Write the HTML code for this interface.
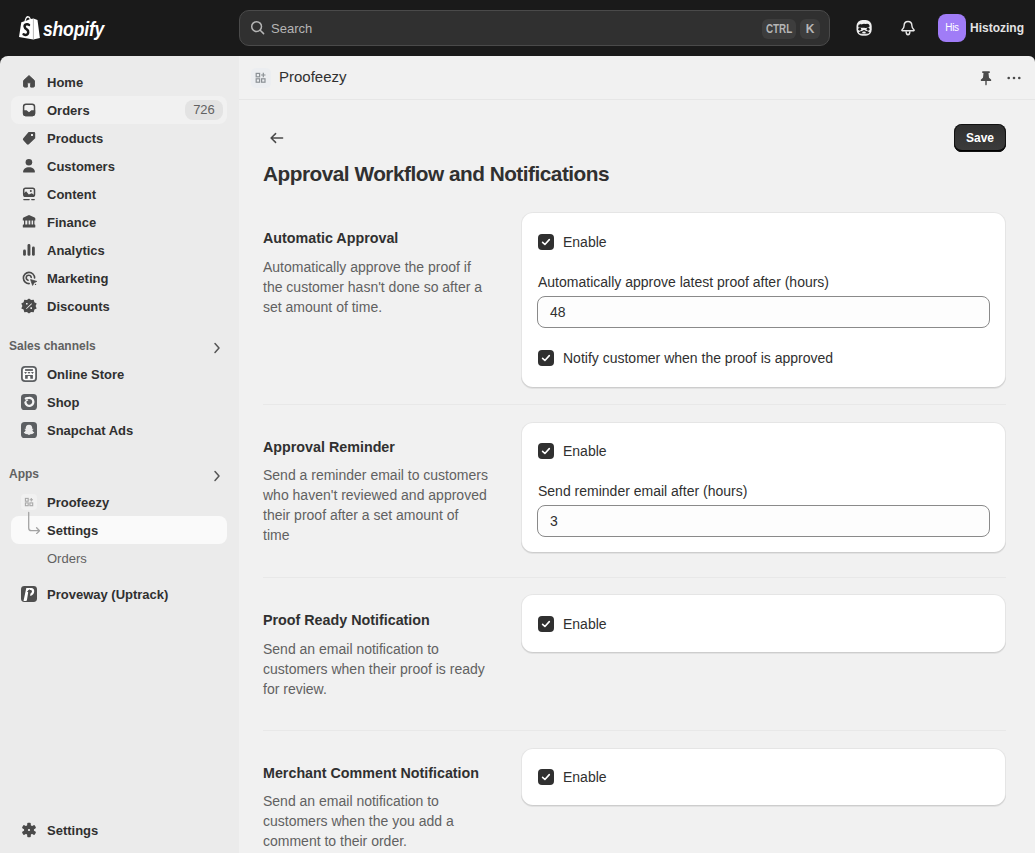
<!DOCTYPE html>
<html><head><meta charset="utf-8">
<style>
*{box-sizing:border-box;margin:0;padding:0}
html,body{width:1035px;height:853px;overflow:hidden;background:#1a1a1a;font-family:"Liberation Sans",sans-serif;color:#303030}
.a{position:absolute}
#top{position:absolute;left:0;top:0;width:1035px;height:56px;background:#1a1a1a}
#side{position:absolute;left:0;top:56px;width:239px;height:797px;background:#ebebeb;border-top-left-radius:8px;overflow:hidden}
#main{position:absolute;left:239px;top:56px;width:796px;height:797px;background:#f1f1f1;border-top-right-radius:6px;overflow:hidden}
.ni{position:absolute;left:11px;width:216px;height:28px;border-radius:8px}
.nt{position:absolute;left:47px;margin-top:1px;font-size:13px;font-weight:700;line-height:28px;height:28px;white-space:nowrap;color:#303030}
.ic{position:absolute;left:21px;width:16px;height:16px}
.sh{position:absolute;left:9px;font-size:12px;font-weight:700;line-height:28px;color:#616161}
.txt{position:absolute;font-size:14px;line-height:20px;white-space:nowrap}
.h{position:absolute;left:24px;font-size:14.3px;font-weight:700;line-height:20px;white-space:nowrap;color:#303030}
.d{position:absolute;left:24px;font-size:14px;line-height:20px;color:#616161;white-space:nowrap}
.card{position:absolute;left:282px;width:485px;background:#fff;border-radius:12px;box-shadow:0 1px 0 0 rgba(26,26,26,.07),0 0 0 1px rgba(0,0,0,.1) inset, 0 -1px 0 0 rgba(0,0,0,.1) inset}
.cb{position:absolute;left:17px;width:16px;height:16px;background:#303030;border-radius:4px}
.cb svg{position:absolute;left:0;top:0}
.cl{position:absolute;left:42px;font-size:14px;line-height:20px;white-space:nowrap;color:#303030}
.lab{position:absolute;left:17px;font-size:14px;line-height:20px;white-space:nowrap;color:#303030}
.inp{position:absolute;left:16px;width:453px;height:32px;border:1px solid #8a8a8a;border-radius:8px;background:#fdfdfd}
.inp span{position:absolute;left:12px;top:5px;font-size:14px;line-height:20px;color:#303030}
.div{position:absolute;left:24px;width:743px;height:1px;background:#e8e8e8}
</style></head><body>
<div id="top">
  <svg class="a" style="left:16px;top:12px" width="28" height="30" viewBox="0 0 28 30">
    <path fill="#fff" d="M5.3 10.2 L8.4 9.2 Q9.6 4 11.9 4 Q14 4 14.9 6.9 L17.4 6.4 L21.5 8.1 L23.9 26 L17.3 27.6 L3 25 Z"/>
    <path fill="#1a1a1a" d="M9.6 8.9 Q10.6 5.6 12 5.6 Q13.2 5.6 13.7 7.2 Z"/>
    <path fill="none" stroke="#9a9a9a" stroke-width=".7" d="M17.4 7.2 V27.4"/>
    <path fill="none" stroke="#1a1a1a" stroke-width="2.5" stroke-linecap="round" d="M13 12.9 Q11.9 12 10.5 12.3 Q8.4 12.7 8.6 14.7 Q8.8 16.4 10.7 17.4 Q12.5 18.5 12.2 20.6 Q11.8 23 9.2 22.9 Q8.2 22.8 7.6 22.3"/>
  </svg>
  <div class="a" style="left:43px;top:16px;font-size:19.5px;font-weight:700;font-style:italic;color:#fff;line-height:26px;transform:scaleX(.9);transform-origin:0 0;letter-spacing:-.2px">shopify</div>
  <!-- search -->
  <div class="a" style="left:239px;top:10px;width:591px;height:36px;border-radius:10px;background:#303030;border:1px solid #4a4a4a"></div>
  <svg class="a" style="left:248px;top:18px" width="20" height="20" viewBox="0 0 20 20"><circle cx="8.6" cy="8.6" r="4.9" fill="none" stroke="#b5b5b5" stroke-width="1.5"/><path stroke="#b5b5b5" stroke-width="1.5" stroke-linecap="round" d="M12.2 12.2 L15.6 15.6"/></svg>
  <div class="a" style="left:271px;top:19px;font-size:13px;line-height:20px;color:#b5b5b5">Search</div>
  <div class="a" style="left:762px;top:19px;width:34px;height:20px;border-radius:6px;background:#3d3d3d;color:#b5b5b5"><span style="position:absolute;left:4px;top:0;font-size:12px;font-weight:700;line-height:20px;transform:scaleX(.82);transform-origin:0 0;white-space:nowrap">CTRL</span></div>
  <div class="a" style="left:800px;top:19px;width:20px;height:20px;border-radius:6px;background:#3d3d3d;font-size:12px;font-weight:700;line-height:20px;text-align:center;color:#b5b5b5">K</div>
  <svg class="a" style="left:852px;top:16px" width="24" height="24" viewBox="0 0 24 24">
    <rect x="4.5" y="3.9" width="15.2" height="15.8" rx="6" fill="#f0f0f0"/>
    <path fill="#1a1a1a" d="M6.2 11.3 L6.4 9.2 L7.3 7.9 L7.8 9 L8.7 7.7 L9.5 8.5 Q11.2 7.5 13.2 7.9 L15.3 7.8 Q17.2 8 17.5 9.5 L17.4 11.1 Q14.8 12.3 12 11.8 Q9 12 6.2 11.3 Z"/>
    <circle cx="7.7" cy="13.3" r="1.45" fill="#1a1a1a"/><circle cx="16.1" cy="13.3" r="1.45" fill="#1a1a1a"/>
    <path fill="#1a1a1a" d="M6.7 16.4 Q8.4 15 10.1 15 Q11.3 14 12 14.1 Q12.8 14 14 15 Q15.8 15 17.6 16.4 Q16.6 18 14.8 17.8 Q13.5 17.6 12.3 17.5 Q10.8 17.6 9.4 17.8 Q7.6 18 6.7 16.4 Z"/>
    <ellipse cx="12" cy="16.4" rx="1.9" ry=".8" fill="#f0f0f0"/>
    <path fill="#a9a9a9" d="M8.4 18.7 H15.6 Q14.1 19.7 12 19.7 Q9.9 19.7 8.4 18.7 Z"/>
  </svg>
  <svg class="a" style="left:896px;top:16px" width="24" height="24" viewBox="0 0 24 24"><path fill="none" stroke="#e8e8e8" stroke-width="1.4" stroke-linejoin="round" d="M12 5.5 C14.5 5.5 15.9 7.3 15.9 9.8 C15.9 11.7 16.6 12.6 17.9 13.8 Q18.6 14.6 17.7 14.8 H6.3 Q5.4 14.6 6.1 13.8 C7.4 12.6 8.1 11.7 8.1 9.8 C8.1 7.3 9.5 5.5 12 5.5 Z"/><path fill="none" stroke="#e8e8e8" stroke-width="1.4" d="M10.1 15.2 Q10.1 18.7 12 18.7 Q13.9 18.7 13.9 15.2"/></svg>
  <div class="a" style="left:938px;top:14px;width:28px;height:28px;border-radius:8px;background:#a07cf7;color:#fff;font-size:10px;line-height:28px;text-align:center;letter-spacing:-.3px">His</div>
  <div class="a" style="left:970px;top:18px;font-size:12px;font-weight:700;line-height:20px;color:#e3e3e3">Histozing</div>
</div>

<div id="side">
  <div class="ni" style="top:40px;background:#f1f1f1"></div>
  <div class="ni" style="top:460px;background:#fafafa"></div>
  <!-- icons -->
  <svg class="a" style="left:19px;top:16px" width="20" height="20" viewBox="0 0 20 20"><path fill="#4a4a4a" stroke="#4a4a4a" stroke-width="1" stroke-linejoin="round" d="M10 3.6 L15.4 8.6 V14 Q15.4 15.1 14.3 15.1 H11.7 V11.3 Q11.7 10.8 11.2 10.8 H8.8 Q8.3 10.8 8.3 11.3 V15.1 H5.7 Q4.6 15.1 4.6 14 V8.6 Z"/></svg>
  <svg class="a" style="left:19px;top:44px" width="20" height="20" viewBox="0 0 20 20"><rect x="4.6" y="4.2" width="10.9" height="11.3" rx="2.4" fill="none" stroke="#4a4a4a" stroke-width="1.5"/><path fill="#4a4a4a" d="M3.9 10.2 H7.6 L10 12.2 L12.4 10.2 H16.2 V13.8 Q16.2 16.2 13.8 16.2 H6.3 Q3.9 16.2 3.9 13.8 Z"/></svg>
  <svg class="a" style="left:19px;top:72px" width="20" height="20" viewBox="0 0 20 20"><path fill="#4a4a4a" fill-rule="evenodd" d="M9.6 4 H15 Q16.2 4 16.2 5.2 V10.2 L9.9 16.2 Q8.9 17.1 7.9 16.2 L4.3 12.2 Q3.4 11.2 4.3 10.2 Z M12 6.1 H14 V8.1 H12 Z"/></svg>
  <svg class="a" style="left:19px;top:100px" width="20" height="20" viewBox="0 0 20 20"><circle cx="9.9" cy="6.3" r="3.3" fill="#4a4a4a"/><path fill="#4a4a4a" d="M4.1 15.9 C4.1 13.2 6.6 11.2 10 11.2 C13.4 11.2 15.9 13.2 15.9 15.9 Q15.9 16.6 15.2 16.6 H4.8 Q4.1 16.6 4.1 15.9 Z"/></svg>
  <svg class="a" style="left:19px;top:128px" width="20" height="20" viewBox="0 0 20 20"><rect x="4.7" y="4.2" width="10.8" height="8.1" rx="1.8" fill="none" stroke="#4a4a4a" stroke-width="1.5"/><path fill="#4a4a4a" d="M5 12 V9.2 L7.1 7.2 L9.8 10.6 L12.8 9.2 L15.2 11 V12 Z"/><circle cx="11.8" cy="6.9" r="1" fill="#4a4a4a"/><rect x="4.2" y="14.9" width="6.6" height="1.3" rx=".6" fill="#4a4a4a"/><rect x="12.1" y="14.9" width="3.8" height="1.3" rx=".6" fill="#4a4a4a"/></svg>
  <svg class="a" style="left:19px;top:156px" width="20" height="20" viewBox="0 0 20 20"><path fill="#4a4a4a" d="M10 3 L15.6 5.6 Q16.3 6 16.3 6.8 V8.4 H3.8 V6.8 Q3.8 6 4.5 5.6 Z"/><rect x="5" y="8" width="1.3" height="5" fill="#4a4a4a"/><rect x="8.3" y="8" width="1.3" height="5" fill="#4a4a4a"/><rect x="11.3" y="8" width="1.3" height="5" fill="#4a4a4a"/><rect x="14.1" y="8" width="1.3" height="5" fill="#4a4a4a"/><rect x="3.8" y="12.4" width="12.5" height="3.2" rx=".6" fill="#4a4a4a"/></svg>
  <svg class="a" style="left:19px;top:184px" width="20" height="20" viewBox="0 0 20 20"><rect x="4.1" y="9.5" width="2.8" height="6.3" rx="1.4" fill="#4a4a4a"/><rect x="8.5" y="4" width="2.9" height="11.8" rx="1.4" fill="#4a4a4a"/><rect x="13" y="6.6" width="2.8" height="9.2" rx="1.4" fill="#4a4a4a"/></svg>
  <svg class="a" style="left:19px;top:212px" width="20" height="20" viewBox="0 0 20 20"><path fill="none" stroke="#4a4a4a" stroke-width="1.6" stroke-linecap="round" d="M10.2 15.6 A5.6 5.6 0 1 1 15.6 10"/><path fill="none" stroke="#4a4a4a" stroke-width="1.6" stroke-linecap="round" d="M9 12.2 A2.5 2.5 0 1 1 12.2 9.4"/><path fill="#4a4a4a" stroke="#4a4a4a" stroke-width=".8" stroke-linejoin="round" d="M11.6 11.6 L17.8 13.4 L15.2 14.6 L13.6 17.4 Z"/><circle cx="16.5" cy="16.4" r=".7" fill="#4a4a4a"/></svg>
  <svg class="a" style="left:19px;top:240px" width="20" height="20" viewBox="0 0 20 20"><path fill="#4a4a4a" fill-rule="evenodd" d="M10 2.4 L12.1 4 L14.7 3.7 L15.4 6.3 L17.7 7.6 L16.6 10 L17.7 12.4 L15.4 13.6 L14.7 16.3 L12.1 16 L10 17.6 L7.9 16 L5.3 16.3 L4.6 13.6 L2.3 12.4 L3.4 10 L2.3 7.6 L4.6 6.3 L5.3 3.7 L7.9 4 Z M7 7 H8.6 V8.6 H7 Z M11.4 11.3 H13 V12.9 H11.4 Z M12.4 7.3 L13 7.9 L7.6 13.1 L7 12.5 Z"/></svg>
  <!-- channel icons -->
  <svg class="a" style="left:19px;top:308px" width="20" height="20" viewBox="0 0 20 20"><rect x="2.9" y="2.9" width="14.2" height="14.2" rx="3.2" fill="#fbfbfb" stroke="#5c5f62" stroke-width="1.8"/><rect x="6.1" y="5.1" width="7.8" height="1.8" fill="#5c5f62"/><path fill="#5c5f62" d="M5.1 8 H8 L6.6 9.9 Z M8.55 8 H11.45 L10 9.9 Z M12 8 H14.9 L13.4 9.9 Z"/><path fill="#5c5f62" d="M6.1 11 H13.9 V14.8 H11.3 V12.6 Q11.3 12 10.7 12 H9.3 Q8.7 12 8.7 12.6 V14.8 H6.1 Z"/></svg>
  <svg class="a" style="left:19px;top:336px" width="20" height="20" viewBox="0 0 20 20"><rect x="2" y="2" width="16" height="16" rx="3.6" fill="#5c5f62"/><path fill="none" stroke="#f4f4f4" stroke-width="2.3" stroke-linecap="round" d="M6.8 6.6 Q8.2 5.9 9.8 5.9 A4 4 0 1 1 6.4 10.4"/><path fill="none" stroke="#f4f4f4" stroke-width="1.3" stroke-linecap="round" d="M6.8 9.2 Q7.6 8.4 8.6 8.2"/></svg>
  <svg class="a" style="left:19px;top:364px" width="20" height="20" viewBox="0 0 20 20"><rect x="2" y="2" width="16" height="16" rx="3.6" fill="#5c5f62"/><path fill="#ececec" d="M10 4.8 C12.4 4.8 13.3 6.6 13.3 8.3 V8.9 L14.3 8.8 Q14.6 9 14.2 9.4 L13.3 9.9 Q13.7 11.8 15.3 12.6 Q15.2 13.2 13.9 13.4 L13.5 14.1 L11.3 14.2 Q10.6 14.9 10 14.9 Q9.4 14.9 8.7 14.2 L6.5 14.1 L6.1 13.4 Q4.8 13.2 4.7 12.6 Q6.3 11.8 6.7 9.9 L5.8 9.4 Q5.4 9 5.7 8.8 L6.7 8.9 V8.3 C6.7 6.6 7.6 4.8 10 4.8 Z"/></svg>
  <div class="a" style="left:21px;top:438px;width:16px;height:16px;border-radius:4px;background:#f1f1f1"></div>
  <svg class="a" style="left:19px;top:436px" width="20" height="20" viewBox="0 0 20 20"><g fill="none" stroke="#a8a8a8" stroke-width="1.1"><rect x="6.4" y="6.4" width="2.8" height="2.8"/><rect x="6.4" y="10.9" width="2.8" height="2.8"/><rect x="10.9" y="10.9" width="2.8" height="2.8"/></g><path stroke="#a8a8a8" stroke-width="1.1" d="M12.3 6 V9.4 M10.6 7.7 H14"/></svg>
  <svg class="a" style="left:19px;top:452px" width="24" height="26" viewBox="0 0 24 26"><path fill="none" stroke="#a3a3a3" stroke-width="1.3" stroke-linecap="round" stroke-linejoin="round" d="M9.7 4.5 V20 Q9.7 22.7 12.4 22.7 H20.4 M17.6 19.8 L20.5 22.7 L17.6 25.6"/></svg>
  <svg class="a" style="left:19px;top:528px" width="20" height="20" viewBox="0 0 20 20"><rect x="2" y="2" width="16" height="16" rx="3.4" fill="#4f4f4f"/><path fill="#fff" d="M7.3 3.9 H12.2 Q15.4 4 15.2 7.4 Q15 10.8 11.4 11.9 L10.6 12.1 V9.9 Q12.9 9.1 12.9 7.4 Q12.9 6 11.7 6 H9.6 L7.9 16.2 Q7.7 16.9 7 16.9 H4.9 Q4.5 16.9 4.6 16.4 Z"/><path fill="#4f4f4f" d="M10.4 5.2 L12.9 8.1 H11.3 V12.8 H9.5 V8.1 H7.9 Z"/></svg>
  <svg class="a" style="left:19px;top:764px" width="20" height="20" viewBox="0 0 20 20"><g fill="#4a4a4a"><circle cx="10" cy="10" r="5"/><rect x="8.2" y="2.7" width="3.6" height="4" rx="1"/><rect x="8.2" y="13.3" width="3.6" height="4" rx="1"/><rect x="8.2" y="2.7" width="3.6" height="4" rx="1" transform="rotate(60 10 10)"/><rect x="8.2" y="2.7" width="3.6" height="4" rx="1" transform="rotate(120 10 10)"/><rect x="8.2" y="2.7" width="3.6" height="4" rx="1" transform="rotate(240 10 10)"/><rect x="8.2" y="2.7" width="3.6" height="4" rx="1" transform="rotate(300 10 10)"/></g><circle cx="10" cy="10" r="1.1" fill="#f4f4f4"/></svg>
  <!-- labels -->
  <div class="nt" style="top:12px">Home</div>
  <div class="nt" style="top:40px">Orders</div>
  <div class="a" style="left:185px;top:44px;width:38px;height:20px;border-radius:8px;background:#e3e3e3;font-size:13px;line-height:20px;text-align:center;color:#616161">726</div>
  <div class="nt" style="top:68px">Products</div>
  <div class="nt" style="top:96px">Customers</div>
  <div class="nt" style="top:124px">Content</div>
  <div class="nt" style="top:152px">Finance</div>
  <div class="nt" style="top:180px">Analytics</div>
  <div class="nt" style="top:208px">Marketing</div>
  <div class="nt" style="top:236px">Discounts</div>
  <div class="sh" style="top:276px">Sales channels</div>
  <svg class="a" style="left:209px;top:282px" width="16" height="20" viewBox="0 0 16 20"><path fill="none" stroke="#555" stroke-width="1.5" stroke-linecap="round" stroke-linejoin="round" d="M6 5.5 L10 10 L6 14.5"/></svg>
  <div class="nt" style="top:304px">Online Store</div>
  <div class="nt" style="top:332px">Shop</div>
  <div class="nt" style="top:360px">Snapchat Ads</div>
  <div class="sh" style="top:404px">Apps</div>
  <svg class="a" style="left:209px;top:410px" width="16" height="20" viewBox="0 0 16 20"><path fill="none" stroke="#555" stroke-width="1.5" stroke-linecap="round" stroke-linejoin="round" d="M6 5.5 L10 10 L6 14.5"/></svg>
  <div class="nt" style="top:432px">Proofeezy</div>
  <div class="nt" style="top:460px">Settings</div>
  <div class="nt" style="top:488px;color:#616161;font-weight:400">Orders</div>
  <div class="nt" style="top:524px">Proveway (Uptrack)</div>
  <div class="nt" style="top:760px">Settings</div>
</div>

<div id="main">
  <!-- header -->
  <div class="a" style="left:12px;top:12px;width:20px;height:20px;border-radius:5px;background:#eceef1"></div>
  <svg class="a" style="left:12px;top:12px" width="20" height="20" viewBox="0 0 20 20"><g fill="none" stroke="#8c9196" stroke-width="1.2"><rect x="5.2" y="5.4" width="3.4" height="3.4"/><rect x="5.2" y="10.8" width="3.4" height="3.4"/><rect x="10.6" y="10.8" width="3.4" height="3.4"/></g><path stroke="#8c9196" stroke-width="1.2" d="M12.3 4.8 V9.2 M10.1 7 H14.5"/></svg>
  <div class="a" style="left:40px;top:11px;font-size:15px;line-height:20px;color:#303030;white-space:nowrap">Proofeezy</div>
  <svg class="a" style="left:737px;top:12px" width="20" height="20" viewBox="0 0 20 20"><path fill="#4a4a4a" d="M6.8 3.2 H13.2 Q13.9 3.2 13.9 3.9 V4.3 Q13.9 5 13.2 5 H12.5 L13 9.8 L15 11.6 Q15.4 12 15.2 12.6 Q15 13.1 14.4 13.1 H10.7 V16.6 Q10.7 17.4 10 17.4 Q9.3 17.4 9.3 16.6 V13.1 H5.6 Q5 13.1 4.8 12.6 Q4.6 12 5 11.6 L7 9.8 L7.5 5 H6.8 Q6.1 5 6.1 4.3 V3.9 Q6.1 3.2 6.8 3.2 Z"/></svg>
  <svg class="a" style="left:765px;top:12px" width="20" height="20" viewBox="0 0 20 20"><circle cx="4.7" cy="10" r="1.3" fill="#4a4a4a"/><circle cx="10" cy="10" r="1.3" fill="#4a4a4a"/><circle cx="15.3" cy="10" r="1.3" fill="#4a4a4a"/></svg>
  <div class="a" style="left:0;top:43px;width:796px;height:1px;background:#e6e6e6"></div>
  <!-- back + save -->
  <svg class="a" style="left:28px;top:72px" width="20" height="20" viewBox="0 0 20 20"><path fill="none" stroke="#4a4a4a" stroke-width="1.5" stroke-linecap="round" stroke-linejoin="round" d="M15.6 10 H4.2 M8.6 5.6 L4.1 10 L8.6 14.4"/></svg>
  <div class="a" style="left:715px;top:68px;width:52px;height:28px;border-radius:8px;background:linear-gradient(#303030,#3c3c3c);box-shadow:0 0 0 1px #111 inset,0 1px 0 0 rgba(255,255,255,.25) inset,0 -2px 0 0 #000 inset;color:#fff;font-size:12px;font-weight:700;line-height:28px;text-align:center">Save</div>
  <div class="a" style="left:24px;top:106px;font-size:20.8px;letter-spacing:-.5px;font-weight:700;line-height:24px;white-space:nowrap;color:#303030">Approval Workflow and Notifications</div>
  <!-- section 1 -->
  <div class="h" style="top:172px">Automatic Approval</div>
  <div class="d" style="top:201px">Automatically approve the proof if<br>the customer hasn't done so after a<br>set amount of time.</div>
  <div class="card" style="top:156px;height:176px">
    <div class="cb" style="top:22px"><svg width="16" height="16" viewBox="0 0 16 16"><path fill="none" stroke="#fff" stroke-width="1.6" stroke-linecap="round" stroke-linejoin="round" d="M4.6 8.3 L6.9 10.5 L11.3 5.6"/></svg></div><div class="cl" style="top:20px">Enable</div>
    <div class="lab" style="top:60px">Automatically approve latest proof after (hours)</div>
    <div class="inp" style="top:84px"><span>48</span></div>
    <div class="cb" style="top:138px"><svg width="16" height="16" viewBox="0 0 16 16"><path fill="none" stroke="#fff" stroke-width="1.6" stroke-linecap="round" stroke-linejoin="round" d="M4.6 8.3 L6.9 10.5 L11.3 5.6"/></svg></div><div class="cl" style="top:136px">Notify customer when the proof is approved</div>
  </div>
  <div class="div" style="top:348px"></div>
  <!-- section 2 -->
  <div class="h" style="top:381px">Approval Reminder</div>
  <div class="d" style="top:409px">Send a reminder email to customers<br>who haven't reviewed and approved<br>their proof after a set amount of<br>time</div>
  <div class="card" style="top:366px;height:131px">
    <div class="cb" style="top:21px"><svg width="16" height="16" viewBox="0 0 16 16"><path fill="none" stroke="#fff" stroke-width="1.6" stroke-linecap="round" stroke-linejoin="round" d="M4.6 8.3 L6.9 10.5 L11.3 5.6"/></svg></div><div class="cl" style="top:19px">Enable</div>
    <div class="lab" style="top:59px">Send reminder email after (hours)</div>
    <div class="inp" style="top:83px"><span>3</span></div>
  </div>
  <div class="div" style="top:521px"></div>
  <!-- section 3 -->
  <div class="h" style="top:554px">Proof Ready Notification</div>
  <div class="d" style="top:583px">Send an email notification to<br>customers when their proof is ready<br>for review.</div>
  <div class="card" style="top:538px;height:59px">
    <div class="cb" style="top:22px"><svg width="16" height="16" viewBox="0 0 16 16"><path fill="none" stroke="#fff" stroke-width="1.6" stroke-linecap="round" stroke-linejoin="round" d="M4.6 8.3 L6.9 10.5 L11.3 5.6"/></svg></div><div class="cl" style="top:20px">Enable</div>
  </div>
  <div class="div" style="top:674px"></div>
  <!-- section 4 -->
  <div class="h" style="top:707px">Merchant Comment Notification</div>
  <div class="d" style="top:735px">Send an email notification to<br>customers when the you add a<br>comment to their order.</div>
  <div class="card" style="top:692px;height:58px">
    <div class="cb" style="top:21px"><svg width="16" height="16" viewBox="0 0 16 16"><path fill="none" stroke="#fff" stroke-width="1.6" stroke-linecap="round" stroke-linejoin="round" d="M4.6 8.3 L6.9 10.5 L11.3 5.6"/></svg></div><div class="cl" style="top:19px">Enable</div>
  </div>
</div>
</body></html>
